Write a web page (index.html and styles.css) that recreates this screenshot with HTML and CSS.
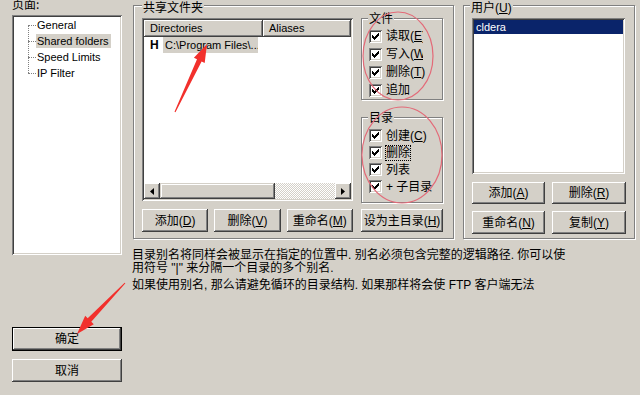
FILE: index.html
```html
<!DOCTYPE html>
<html>
<head>
<meta charset="utf-8">
<link rel="stylesheet" href="styles.css">
</head>
<body>
<div class="dlg">
  <div class="left">
    <div class="page-lbl">页面:</div>
    <div class="tree sunken">
      <ul class="tree-list">
        <li><span class="branch"></span><span class="tlabel">General</span></li>
        <li><span class="branch"></span><span class="tlabel sel">Shared folders</span></li>
        <li><span class="branch"></span><span class="tlabel">Speed Limits</span></li>
        <li><span class="branch"></span><span class="tlabel">IP Filter</span></li>
      </ul>
    </div>
    <button class="btn btn-ok">确定</button>
    <button class="btn btn-cancel">取消</button>
  </div>
  <div class="main">
    <div class="groups">
      <fieldset class="group big share">
        <legend>共享文件夹</legend>
        <div class="share-grid">
          <div class="listview sunken">
            <div class="lv-head"><span class="hcell dir">Directories</span><span class="hcell alias">Aliases</span></div>
            <div class="lv-body">
              <div class="lv-row"><b class="home">H</b><span class="path">C:\Program Files\...</span></div>
            </div>
            <div class="hscroll">
              <span class="sb-btn"><svg width="4" height="7" viewBox="0 0 4 7"><path d="M4 0v7L0 3.5z" fill="#000"/></svg></span>
              <span class="thumb"></span>
              <span class="track"></span>
              <span class="sb-btn"><svg width="4" height="7" viewBox="0 0 4 7"><path d="M0 0v7l4-3.5z" fill="#000"/></svg></span>
            </div>
          </div>
          <div class="perm-col">
            <fieldset class="group perm files">
              <legend>文件</legend>
              <label class="cbrow"><span class="cb"><svg width="7" height="7" viewBox="0 0 7 7"><path d="M0 2h1v1h1v1h1v-1h1v-1h1v-1h1v-1h1v3h-1v1h-1v1h-1v1h-1v1h-1v-1h-1v-1h-1z" fill="#000"/></svg></span><span class="cbt clip">读取(<u>E</u>)</span></label>
              <label class="cbrow"><span class="cb"><svg width="7" height="7" viewBox="0 0 7 7"><path d="M0 2h1v1h1v1h1v-1h1v-1h1v-1h1v-1h1v3h-1v1h-1v1h-1v1h-1v1h-1v-1h-1v-1h-1z" fill="#000"/></svg></span><span class="cbt clip">写入(<u>W</u>)</span></label>
              <label class="cbrow"><span class="cb"><svg width="7" height="7" viewBox="0 0 7 7"><path d="M0 2h1v1h1v1h1v-1h1v-1h1v-1h1v-1h1v3h-1v1h-1v1h-1v1h-1v1h-1v-1h-1v-1h-1z" fill="#000"/></svg></span><span class="cbt">删除(<u>T</u>)</span></label>
              <label class="cbrow"><span class="cb"><svg width="7" height="7" viewBox="0 0 7 7"><path d="M0 2h1v1h1v1h1v-1h1v-1h1v-1h1v-1h1v3h-1v1h-1v1h-1v1h-1v1h-1v-1h-1v-1h-1z" fill="#000"/></svg></span><span class="cbt">追加</span></label>
            </fieldset>
            <fieldset class="group perm dirs">
              <legend>目录</legend>
              <label class="cbrow"><span class="cb"><svg width="7" height="7" viewBox="0 0 7 7"><path d="M0 2h1v1h1v1h1v-1h1v-1h1v-1h1v-1h1v3h-1v1h-1v1h-1v1h-1v1h-1v-1h-1v-1h-1z" fill="#000"/></svg></span><span class="cbt">创建(<u>C</u>)</span></label>
              <label class="cbrow"><span class="cb"><svg width="7" height="7" viewBox="0 0 7 7"><path d="M0 2h1v1h1v1h1v-1h1v-1h1v-1h1v-1h1v3h-1v1h-1v1h-1v1h-1v1h-1v-1h-1v-1h-1z" fill="#000"/></svg></span><span class="cbt focus">删除</span></label>
              <label class="cbrow"><span class="cb"><svg width="7" height="7" viewBox="0 0 7 7"><path d="M0 2h1v1h1v1h1v-1h1v-1h1v-1h1v-1h1v3h-1v1h-1v1h-1v1h-1v1h-1v-1h-1v-1h-1z" fill="#000"/></svg></span><span class="cbt">列表</span></label>
              <label class="cbrow"><span class="cb"><svg width="7" height="7" viewBox="0 0 7 7"><path d="M0 2h1v1h1v1h1v-1h1v-1h1v-1h1v-1h1v3h-1v1h-1v1h-1v1h-1v1h-1v-1h-1v-1h-1z" fill="#000"/></svg></span><span class="cbt">+ 子目录</span></label>
            </fieldset>
          </div>
          <div class="btn-row">
            <button class="btn">添加(<u>D</u>)</button>
            <button class="btn">删除(<u>V</u>)</button>
            <button class="btn">重命名(<u>M</u>)</button>
          </div>
          <button class="btn btn-home">设为主目录(<u>H</u>)</button>
        </div>
      </fieldset>
      <fieldset class="group big users">
        <legend>用户(<u>U</u>)</legend>
        <div class="userlist sunken">
          <div class="user sel">cldera</div>
        </div>
        <div class="user-btns">
          <button class="btn">添加(<u>A</u>)</button>
          <button class="btn">删除(<u>R</u>)</button>
          <button class="btn">重命名(<u>N</u>)</button>
          <button class="btn">复制(<u>Y</u>)</button>
        </div>
      </fieldset>
    </div>
    <div class="help">
      <p>目录别名将同样会被显示在指定的位置中. 别名必须包含完整的逻辑路径. 你可以使<br>用符号 "|" 来分隔一个目录的多个别名.</p>
      <p>如果使用别名, 那么请避免循环的目录结构. 如果那样将会使 FTP 客户端无法</p>
    </div>
  </div>
</div>
<svg class="annot" width="640" height="395" viewBox="0 0 640 395">
  <ellipse cx="398" cy="56" rx="35" ry="44" fill="none" stroke="#e36a78" stroke-width="1.2"/>
  <ellipse cx="402" cy="155" rx="40" ry="48" fill="none" stroke="#e36a78" stroke-width="1.2"/>
  <polygon points="175.5,112.2 201.6,61.4 204.7,62.9 207,44 193.9,57.7 197,59.2 174.5,111.8" fill="#f2302c"/>
  <polygon points="125.4,283.3 91.3,321.7 93.8,324.2 77,334 85.2,315.8 87.7,318.3 124.6,282.7" fill="#f2302c"/>
</svg>
</body>
</html>
```

FILE: styles.css
```css
* { box-sizing: border-box; }
html, body { margin: 0; padding: 0; }
body {
  width: 640px;
  height: 395px;
  overflow: hidden;
  position: relative;
  background: #d4d0c8;
  color: #000;
  font: 12px/12px "Liberation Sans", "Noto Sans CJK SC", sans-serif;
}
u { text-decoration: underline; text-underline-offset: 1px; }
p { margin: 0; }

.sunken {
  background: #fff;
  box-shadow: inset 1px 1px 0 #808080, inset -1px -1px 0 #fff, inset 2px 2px 0 #404040, inset -2px -2px 0 #d4d0c8;
}

.dlg { display: flex; padding-left: 12px; height: 395px; }

/* left column */
.left { width: 110px; display: flex; flex-direction: column; }
.page-lbl { height: 17px; margin-top: -2px; line-height: 12px; font-family: "Noto Sans CJK SC", sans-serif; }
.tree { height: 240px; padding: 2px; }
.tree-list { list-style: none; margin: 0; padding: 0; position: relative; font-size: 11px; }
.tree-list::before {
  content: "";
  position: absolute;
  left: 14px; top: 8px; height: 48px;
  border-left: 1px dotted #808080;
}
.tree-list li { height: 16px; display: flex; align-items: center; }
.branch { width: 8px; margin-left: 14px; border-top: 1px dotted #808080; height: 0; }
.tlabel { padding: 0 2px 0 1px; line-height: 14px; height: 14px; }
.tlabel.sel { background: #d4d0c8; }

.btn {
  font: 12px/12px "Liberation Sans", "Noto Sans CJK SC", sans-serif;
  color: #000;
  background: #d4d0c8;
  border: none;
  padding: 0;
  margin: 0;
  box-shadow: inset -1px -1px 0 #404040, inset 1px 1px 0 #fff, inset -2px -2px 0 #808080, inset 2px 2px 0 #d4d0c8;
}
.btn-ok {
  margin-top: 72px;
  height: 24px;
  border: 1px solid #000;
}
.btn-cancel { margin-top: 8px; height: 23px; }

/* main */
.main { margin-left: 11px; width: 502px; }
.groups { display: flex; gap: 9px; margin-top: -5px; height: 244px; }

.group {
  margin: 0;
  min-width: 0;
  border: 1px solid #808080;
  box-shadow: 1px 1px 0 #fff, inset 1px 1px 0 #fff;
}
.group > legend {
  padding: 0 1px;
  line-height: 12px;
  background: #d4d0c8;
}
.big > legend { padding: 6px 1px 0; line-height: 14px; }

.share { width: 321px; padding: 3px 0 0 8px; }
.share-grid {
  display: grid;
  grid-template-columns: 211px 82px;
  grid-template-rows: 183px 23px;
  column-gap: 8px;
  row-gap: 8px;
}

.listview { display: flex; flex-direction: column; padding: 2px; }
.lv-head { display: flex; height: 17px; font-size: 11px; }
.hcell {
  background: #d4d0c8;
  line-height: 17px;
  padding-left: 6px;
  box-shadow: inset -1px -1px 0 #404040, inset 1px 1px 0 #fff, inset -2px -2px 0 #808080;
}
.hcell.dir { width: 119px; }
.hcell.alias { flex: 1; }
.lv-body { flex: 1; }
.lv-row { display: flex; align-items: center; height: 16px; }
.home { font: bold 12px/16px "Liberation Sans", sans-serif; width: 19px; padding-left: 6px; flex: none; }
.path {
  background: #d4d0c8;
  font-size: 11px;
  line-height: 16px;
  padding-left: 2px;
  width: 95px;
  white-space: nowrap;
  overflow: hidden;
}

.hscroll { display: flex; height: 16px; }
.sb-btn {
  width: 16px; height: 16px;
  display: flex; align-items: center; justify-content: center;
  background: #d4d0c8;
  box-shadow: inset -1px -1px 0 #404040, inset 1px 1px 0 #fff, inset -2px -2px 0 #808080, inset 2px 2px 0 #d4d0c8;
}
.thumb {
  width: 115px;
  background: #d4d0c8;
  box-shadow: inset -1px -1px 0 #404040, inset 1px 1px 0 #d4d0c8, inset -2px -2px 0 #808080, inset 2px 2px 0 #fff;
}
.track {
  flex: 1;
  background: repeating-conic-gradient(#d4d0c8 0 25%, #fff 0 50%) 0 0 / 2px 2px;
}

.perm-col { margin-top: -6px; display: flex; flex-direction: column; }
.perm { width: 82px; padding: 0 0 0 7px; flex: none; }
.perm > legend { margin-left: -1px; font-family: "Noto Sans CJK SC", sans-serif; }
.files { height: 88px; padding-top: 3px; }
.files .cbrow { height: 18px; }
.dirs { margin-top: 11px; height: 92px; padding-top: 4px; }
.dirs .cbrow { height: 17px; }
.cbrow { display: flex; align-items: center; }
.cb {
  width: 13px; height: 13px; flex: none;
  display: flex; align-items: center; justify-content: center;
  background: #fff;
  box-shadow: inset 1px 1px 0 #808080, inset -1px -1px 0 #fff, inset 2px 2px 0 #404040, inset -2px -2px 0 #d4d0c8;
}
.cb svg { shape-rendering: crispEdges; }
.cbt { margin-left: 4px; white-space: nowrap; line-height: 14px; }
.cbt.clip { width: 37px; overflow: hidden; }
.cbt.focus { outline: 1px dotted #000; outline-offset: 0; }

.btn-row { display: flex; gap: 6px; }
.btn-row .btn { flex: 1; height: 23px; }
.btn-home { height: 23px; }

.users { width: 172px; padding: 0 0 0 8px; }
.users > legend { margin-left: -2px; }
.userlist { width: 153px; height: 156px; padding: 2px; margin-top: 3px; }
.user { height: 14px; line-height: 14px; padding-left: 2px; font-size: 11px; }
.user.sel { background: #0a246a; color: #fff; }
.user-btns {
  display: grid;
  grid-template-columns: 73px 74px;
  grid-template-rows: 22px 23px;
  gap: 7px;
  margin-top: 8px;
}

.help { margin-top: 10px; margin-left: -1px; line-height: 13px; }
.help p + p { margin-top: 4px; }

.annot { position: absolute; left: 0; top: 0; pointer-events: none; }
```
